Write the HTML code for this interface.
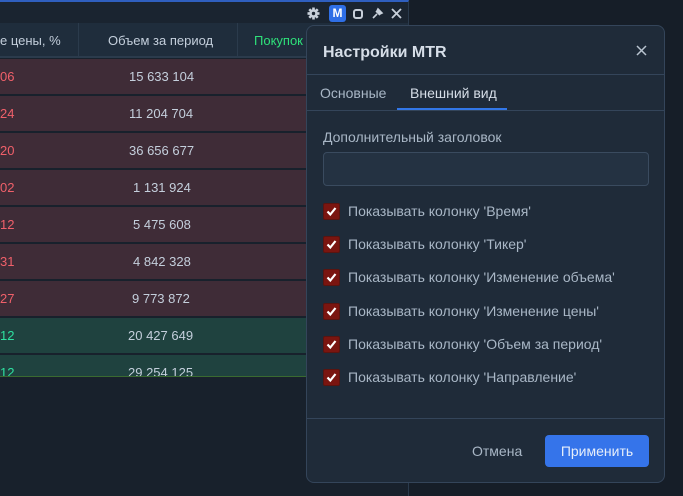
<!DOCTYPE html>
<html><head><meta charset="utf-8"><style>
*{margin:0;padding:0;box-sizing:border-box}
body{width:683px;height:496px;overflow:hidden;background:#161e28;font-family:"Liberation Sans",sans-serif;position:relative}
.win{position:absolute;left:0;top:0;width:409px;height:496px;background:#18212c;border-top:2px solid #2f5fbf;border-right:1px solid #2a3a4c}
.tb{position:absolute;left:0;top:0;width:408px;height:23px;background:#1a2430}
.hdr{position:absolute;left:0;top:23px;width:408px;height:35px;background:#1f2d3c;border-bottom:2px solid #2b3b4c;color:#c4cfdc;font-size:13px}
.hdr div{position:absolute;top:10px}
.row{position:absolute;left:0;width:408px;height:35px;font-size:13px;color:#c4cfdc}
.r{background:#3f2c37}.g{background:#1f423f}
.row span{position:absolute;top:10px}
.dlg{position:absolute;left:306px;top:25px;width:359px;height:458px;background:#1f2b39;border:1px solid #34455a;border-radius:8px;color:#c7d2de}
.cb{position:absolute;left:16px;width:17px;height:17px;background:#7a1510;border:1px solid #5a1410;border-radius:2px}
.cb svg{position:absolute;left:2px;top:2px}
.lbl{position:absolute;left:41px;font-size:14px;color:#a9b7c6}
</style></head><body>
<div class="win">
<div class="tb">
<svg style="position:absolute;left:307px;top:5px" width="13" height="13" viewBox="0 0 13 13"><g fill="#c8d0da"><circle cx="6.5" cy="6.5" r="4.2"/><rect x="5.2" y="0.5" width="2.6" height="12"/><rect x="0.5" y="5.2" width="12" height="2.6"/><rect x="5.2" y="0.5" width="2.6" height="12" transform="rotate(45 6.5 6.5)"/><rect x="5.2" y="0.5" width="2.6" height="12" transform="rotate(-45 6.5 6.5)"/></g><circle cx="6.5" cy="6.5" r="1.7" fill="#1a2430"/></svg>
<div style="position:absolute;left:329px;top:3px;width:17px;height:17px;background:#2f6fe6;border-radius:3px;color:#fff;font-weight:bold;font-size:12px;text-align:center;line-height:17px">M</div>
<div style="position:absolute;left:353px;top:7px;width:10px;height:10px;border:2px solid #c8d0da;border-radius:3px"></div>
<svg style="position:absolute;left:371px;top:5px" width="13" height="13" viewBox="0 0 13 13"><path d="M2 11L6 7M5 4l4 4M7 2l4 4-2 1-3-3z" stroke="#c8d0da" stroke-width="1.6" fill="#c8d0da"/></svg>
<svg style="position:absolute;left:391px;top:6px" width="11" height="11" viewBox="0 0 11 11"><path d="M1 1L10 10M10 1L1 10" stroke="#c8d0da" stroke-width="1.8"/></svg>
</div>
</div>
<div class="hdr">
<div style="left:0">е цены, %</div>
<div style="left:78px;top:0;width:1px;height:35px;background:#2b3b4c"></div>
<div style="left:108px">Объем за период</div>
<div style="left:237px;top:0;width:1px;height:35px;background:#2b3b4c"></div>
<div style="left:254px;color:#2ee07a">Покупок</div>
</div>
<div class="row r" style="top:59px"><span style="left:0;color:#f0606a">06</span><span style="left:129px">15 633 104</span></div>
<div class="row r" style="top:96px"><span style="left:0;color:#f0606a">24</span><span style="left:129px">11 204 704</span></div>
<div class="row r" style="top:133px"><span style="left:0;color:#f0606a">20</span><span style="left:129px">36 656 677</span></div>
<div class="row r" style="top:170px"><span style="left:0;color:#f0606a">02</span><span style="left:133px">1 131 924</span></div>
<div class="row r" style="top:207px"><span style="left:0;color:#f0606a">12</span><span style="left:133px">5 475 608</span></div>
<div class="row r" style="top:244px"><span style="left:0;color:#f0606a">31</span><span style="left:133px">4 842 328</span></div>
<div class="row r" style="top:281px"><span style="left:0;color:#f0606a">27</span><span style="left:132px">9 773 872</span></div>
<div class="row g" style="top:318px"><span style="left:0;color:#2ee0a0">12</span><span style="left:128px">20 427 649</span></div>
<div class="row g" style="top:355px;height:22px;border-bottom:1px solid #3a6a30;overflow:hidden"><span style="left:0;color:#2ee0a0">12</span><span style="left:128px">29 254 125</span></div>
<div class="dlg">
<div style="position:absolute;left:16px;top:18px;font-size:16px;font-weight:bold;color:#d6dee8">Настройки MTR</div>
<svg style="position:absolute;left:329px;top:19px" width="11" height="11" viewBox="0 0 11 11"><path d="M1 1L10 10M10 1L1 10" stroke="#b9c4d0" stroke-width="1.5"/></svg>
<div style="position:absolute;left:0;top:48px;width:357px;height:1px;background:#34455a"></div>
<div style="position:absolute;left:13px;top:59px;font-size:14px;color:#a9b7c6">Основные</div>
<div style="position:absolute;left:103px;top:59px;font-size:14px;color:#d6dee8">Внешний вид</div>
<div style="position:absolute;left:90px;top:82px;width:110px;height:2px;background:#3277e8"></div>
<div style="position:absolute;left:0;top:84px;width:357px;height:1px;background:#34455a"></div>
<div style="position:absolute;left:16px;top:103px;font-size:14px;color:#a9b7c6">Дополнительный заголовок</div>
<div style="position:absolute;left:16px;top:126px;width:326px;height:34px;background:#243242;border:1px solid #3a4b5f;border-radius:4px"></div>
<div class="cb" style="top:177px"><svg width="11" height="11" viewBox="0 0 11 11"><path d="M1.5 5.5L4.3 8.5 9.5 2" stroke="#fff" stroke-width="2.2" fill="none"/></svg></div><div class="lbl" style="top:177px">Показывать колонку 'Время'</div>
<div class="cb" style="top:210px"><svg width="11" height="11" viewBox="0 0 11 11"><path d="M1.5 5.5L4.3 8.5 9.5 2" stroke="#fff" stroke-width="2.2" fill="none"/></svg></div><div class="lbl" style="top:210px">Показывать колонку 'Тикер'</div>
<div class="cb" style="top:243px"><svg width="11" height="11" viewBox="0 0 11 11"><path d="M1.5 5.5L4.3 8.5 9.5 2" stroke="#fff" stroke-width="2.2" fill="none"/></svg></div><div class="lbl" style="top:243px">Показывать колонку 'Изменение объема'</div>
<div class="cb" style="top:277px"><svg width="11" height="11" viewBox="0 0 11 11"><path d="M1.5 5.5L4.3 8.5 9.5 2" stroke="#fff" stroke-width="2.2" fill="none"/></svg></div><div class="lbl" style="top:277px">Показывать колонку 'Изменение цены'</div>
<div class="cb" style="top:310px"><svg width="11" height="11" viewBox="0 0 11 11"><path d="M1.5 5.5L4.3 8.5 9.5 2" stroke="#fff" stroke-width="2.2" fill="none"/></svg></div><div class="lbl" style="top:310px">Показывать колонку 'Объем за период'</div>
<div class="cb" style="top:343px"><svg width="11" height="11" viewBox="0 0 11 11"><path d="M1.5 5.5L4.3 8.5 9.5 2" stroke="#fff" stroke-width="2.2" fill="none"/></svg></div><div class="lbl" style="top:343px">Показывать колонку 'Направление'</div>
<div style="position:absolute;left:0;top:392px;width:357px;height:1px;background:#34455a"></div>
<div style="position:absolute;left:165px;top:417px;font-size:14px;color:#a9b7c6">Отмена</div>
<div style="position:absolute;left:238px;top:409px;width:104px;height:32px;background:#3574ea;border-radius:4px;color:#e6eefa;font-size:14px;text-align:center;line-height:32px">Применить</div>
</div>
</body></html>
